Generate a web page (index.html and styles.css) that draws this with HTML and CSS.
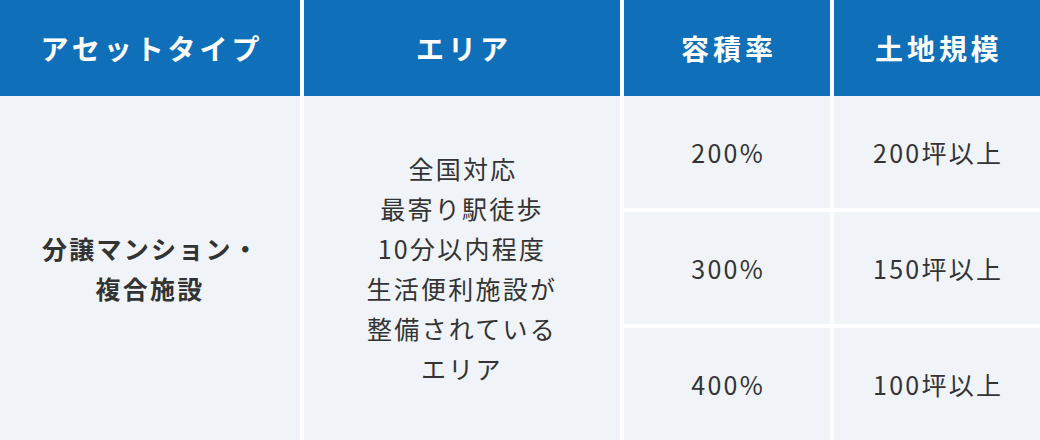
FILE: index.html
```html
<!DOCTYPE html>
<html lang="ja">
<head>
<meta charset="utf-8">
<link rel="stylesheet" href="styles.css">
</head>
<body>
<div class="table">
  <div class="head">
    <div class="th">アセットタイプ</div>
    <div class="th">エリア</div>
    <div class="th">容積率</div>
    <div class="th">土地規模</div>
  </div>
  <div class="body">
    <div class="td type">分譲マンション・<br>複合施設</div>
    <div class="td area">全国対応<br>最寄り駅徒歩<br>10分以内程度<br>生活便利施設が<br>整備されている<br>エリア</div>
    <div class="td">200%</div>
    <div class="td">200坪以上</div>
    <div class="td">300%</div>
    <div class="td">150坪以上</div>
    <div class="td">400%</div>
    <div class="td">100坪以上</div>
  </div>
</div>
</body>
</html>
```
FILE: styles.css
```css
html, body {
  margin: 0;
  padding: 0;
  background: #ffffff;
}
body {
  font-family: "Noto Sans CJK JP", "Noto Sans", sans-serif;
  width: 1040px;
  height: 440px;
  overflow: hidden;
}
.head, .body {
  display: grid;
  grid-template-columns: 300px 316px 206px 206px;
  column-gap: 4px;
}
.head {
  height: 96px;
}
.th {
  background: #0f6fb8;
  color: #ffffff;
  font-weight: 700;
  font-size: 28px;
  letter-spacing: 0.14em;
  text-indent: 0.14em;
  display: flex;
  align-items: center;
  justify-content: center;
}
.body {
  grid-template-rows: 112px 112px 112px;
  row-gap: 4px;
}
.td {
  background: #f0f4f8;
  color: #333333;
  font-size: 25px;
  line-height: 40px;
  letter-spacing: 0.09em;
  text-indent: 0.09em;
  display: flex;
  align-items: center;
  justify-content: center;
  text-align: center;
}
.type {
  grid-row: 1 / 4;
  grid-column: 1;
  font-weight: 700;
}
.area {
  grid-row: 1 / 4;
  grid-column: 2;
}
```
